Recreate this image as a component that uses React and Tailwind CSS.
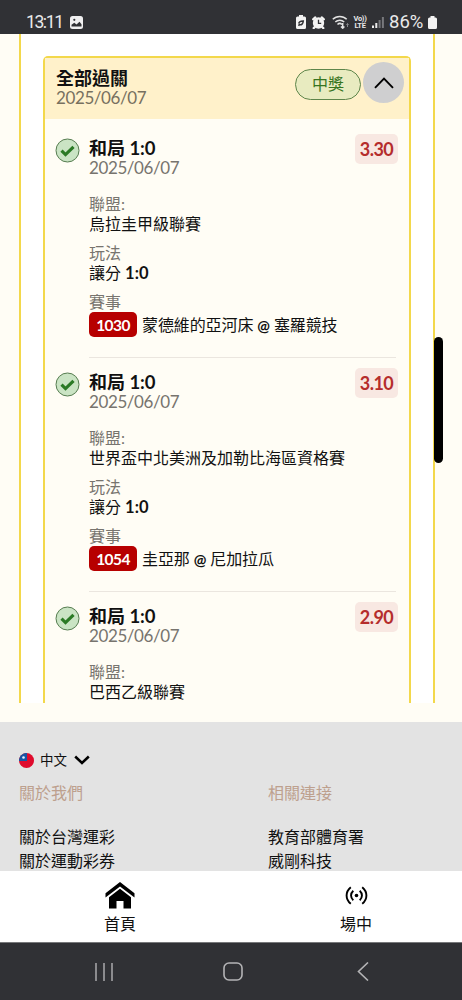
const bets = [
  {
    id: 1,
    odds: "3.30",
    league: "烏拉圭甲級聯賽",
    play: "1:0",
    code: "1030",
    home: "蒙德維的亞河床",
    away: "塞羅競技",
  },
  {
    id: 2,
    odds: "3.10",
    league: "世界盃中北美洲及加勒比海區資格賽",
    play: "1:0",
    code: "1054",
    home: "圭亞那",
    away: "尼加拉瓜",
  },
  {
    id: 3,
    odds: "2.90",
    league: "巴西乙級聯賽",
  },
];

function StatusBar() {
  return (
    <div className="flex h-[34px] shrink-0 items-center bg-[#303135] pl-[26px] pr-[25px] pt-[10px] font-['Roboto','Noto_Sans',sans-serif] text-[18px] text-[#e9e9ea]">
      <span className="w-[37px] whitespace-nowrap text-[17.5px] leading-5 tracking-[-1.4px]">13:11</span>
      <svg className="ml-[7px]" width="13" height="13" viewBox="0 0 13 13">
        <rect width="13" height="13" rx="2.5" fill="#efeff0" />
        <path d="M1.5 10.5V8.8L4.3 6.8 6.5 8.6 9.5 5.8 11.5 8.2V10.500Z" fill="#303135" />
        <circle cx="4.3" cy="3.8" r="1.1" fill="#303135" />
      </svg>

      <div className="ml-auto flex items-center">
        {/* battery saver */}
        <svg width="10" height="14" viewBox="0 0 10 14">
          <path d="M3 0h4v1.500h1.500A1.500 1.500 0 0 1 10 3v9.500a1.500 1.500 0 0 1-1.500 1.500h-7A1.500 1.500 0 0 1 0 12.500V3a1.500 1.500 0 0 1 1.500-1.500H3Z" fill="#f3f3f3" />
          <path d="M2.800 8.500c0-2 1.800-2.300 4.500-2.500-.2 2.800-1.800 4.400-3.900 3.500L2.500 10.800" fill="none" stroke="#303135" strokeWidth="1.500" />
        </svg>
        {/* alarm */}
        <svg className="ml-[6px]" width="13" height="13" viewBox="0 0 13 13">
          <circle cx="6.500" cy="7" r="5.700" fill="#f3f3f3" />
          <path d="M1.200 3.300 3.300 1.400M11.800 3.300 9.700 1.400M2.800 11 1.700 12.100M10.200 11l1.100 1.100" stroke="#f3f3f3" strokeWidth="2.300" strokeLinecap="round" />
          <path d="M6.500 3.800V7.300H9.200" fill="none" stroke="#303135" strokeWidth="1.300" />
        </svg>
        {/* wifi */}
        <svg className="ml-[7px]" width="17" height="14" viewBox="0 0 17 14" fill="none" stroke="#e3e3e3" strokeWidth="1.500">
          <path d="M.8 4.300C4.500.5 11 .5 14.700 4.300M3.300 7c2.400-2.500 6.500-2.500 8.900 0M5.500 9.500c1.300-1.300 3.200-1.300 4.500 0" />
          <path d="M10.700 8v5M9 11.500l1.700 1.700 1.700-1.700" />
          <path d="M15.500 12V8.500M14.300 9.700l1.200-1.200 1.200 1.200" stroke="#85868a" strokeWidth="1" />
        </svg>
        <div className="ml-[4px] w-[14px] text-center text-[7.5px] font-bold leading-[7px] tracking-[-0.3px]">
          <div className="whitespace-nowrap">Vo))</div>
          <div>LTE</div>
        </div>
        <svg className="ml-[5px]" width="12" height="12" viewBox="0 0 12 12">
          <path d="M0 9.500h2V12H0ZM3.300 7h2v5h-2Z" fill="#ededed" />
          <path d="M6.600 4h2v8h-2ZM9.900 1h2v11h-2Z" fill="#77787c" />
        </svg>
        <span className="ml-[5px] w-[39px] whitespace-nowrap text-[18.5px] leading-5">86%</span>
        <svg width="9" height="13" viewBox="0 0 9 13">
          <path d="M2.500 0h4v1.500h1A1.500 1.500 0 0 1 9 3v8.500a1.500 1.500 0 0 1-1.500 1.500h-6A1.500 1.500 0 0 1 0 11.500V3a1.500 1.500 0 0 1 1.500-1.500h1Z" fill="#f3f3f3" />
        </svg>
      </div>
    </div>
  );
}

function BetItem({ bet }) {
  return (
    <div className="flex px-[10px] pt-[14px]">
      <svg className="shrink-0" width="25" height="25" viewBox="0 0 25 25">
        <circle cx="12.500" cy="12.500" r="11.500" fill="#cae4c4" stroke="#567c50" />
        <path d="M6.500 12.700 10.500 16.600 18.500 8.800" fill="none" stroke="#2b7a25" strokeWidth="3.200" />
      </svg>

      <div className="ml-[9px] h-[220px] w-[307px] shrink-0 border-b border-[#ebe6df] text-[16px] leading-5">
        <div className="flex h-10 justify-between">
          <div>
            <p className="text-[18px] font-bold">
              和局 <span className="text-[18.5px]">1:0</span>
            </p>
            <p className="text-[17px] tracking-[-0.4px] text-[#77746e]">2025/06/07</p>
          </div>
          <span className="-mr-[2px] -mt-[4px] flex h-[30px] w-[43px] items-center justify-center rounded-[5px] bg-[#f8e8e2] text-[18px] font-bold tracking-[-0.5px] text-[#b52d2c]">
            {bet.odds}
          </span>
        </div>

        <p className="mt-4 text-[#77746e]">聯盟:</p>
        <p className="whitespace-nowrap">{bet.league}</p>

        {bet.code && (
          <>
            <p className="mt-[9px] text-[#77746e]">玩法</p>
            <p>
              讓分 <span className="text-[16.500px] font-bold">{bet.play}</span>
            </p>

            <p className="mt-[9px] text-[#77746e]">賽事</p>
            <div className="flex h-[25px] items-center">
              <span className="flex h-[25px] w-[48px] items-center justify-center rounded-[5px] bg-[#b70000] text-[15.5px] font-bold tracking-[-0.6px] text-white">
                {bet.code}
              </span>
              <span className="ml-[5px] whitespace-nowrap tracking-[-0.1px]">
                {bet.home} <span className="text-[15px] font-bold">@</span> {bet.away}
              </span>
            </div>
          </>
        )}
      </div>
    </div>
  );
}

function Ticket() {
  return (
    <div className="mx-[22px] mt-[22px] rounded-t-[5px] border-2 border-b-0 border-[#f3d84b] bg-[#fffdf5]">
      <div className="flex h-[61px] items-start justify-between bg-[#fff1ca] pl-[11px] pr-[5px]">
        <div className="pt-[11px] leading-[19px]">
          <p className="text-[18px] font-bold">全部過關</p>
          <p className="text-[17px] tracking-[-0.4px] text-[#77705f]">2025/06/07</p>
        </div>
        <div className="flex items-center pt-[4px]">
          <span className="mr-[2px] mt-[3px] flex h-[31px] w-[66px] items-center justify-center rounded-full border border-[#5e854a] bg-[#e8ebc0] text-[16px] text-[#37751f]">
            中獎
          </span>
          <button className="flex size-[41px] items-center justify-center rounded-full bg-[#cfcfd0]">
            <svg width="20" height="12" viewBox="0 0 20 12" fill="none" stroke="#000" strokeWidth="1.900">
              <path d="M1 10.800 10 1.700 19 10.800" />
            </svg>
          </button>
        </div>
      </div>
      <div className="pt-[5px]">
        {bets.map((bet) => (
          <BetItem key={bet.id} bet={bet} />
        ))}
      </div>
    </div>
  );
}

function Footer() {
  return (
    <div className="h-[149px] shrink-0 bg-[#e3e3e3] pl-[19px] pt-[28px] text-[16px] leading-6">
      <div className="flex h-5 items-center">
        <svg width="15" height="15" viewBox="0 0 15 15">
          <circle cx="7.500" cy="7.500" r="7.500" fill="#df0b2d" />
          <path d="M8 0A7.500 7.500 0 0 0 0 8H8Z" fill="#1756a5" />
          <circle cx="4.500" cy="4.500" r="1.300" fill="#e9f3ff" />
        </svg>
        <span className="ml-[6px] text-[13.5px]">中文</span>
        <svg className="ml-[7px]" width="16" height="10" viewBox="0 0 16 10" fill="none" stroke="#000" strokeWidth="2.500">
          <path d="M1.200 1.500 8 8 14.800 1.500" />
        </svg>
      </div>
      <div className="mt-[11px] grid grid-cols-[249px_1fr]">
        <div>
          <p className="text-[#bda08e]">關於我們</p>
          <p className="mt-[20px]">關於台灣運彩</p>
          <p>關於運動彩券</p>
        </div>
        <div>
          <p className="text-[#bda08e]">相關連接</p>
          <p className="mt-[20px]">教育部體育署</p>
          <p>威剛科技</p>
        </div>
      </div>
    </div>
  );
}

function TabBar() {
  return (
    <div className="flex h-[71px] shrink-0 justify-between bg-white pl-[90px] pr-[76px] text-[16px] leading-5">
      <div className="flex w-[60px] flex-col items-center pt-[11px]">
        <svg width="30" height="27" viewBox="0 0 30 27">
          <path d="M.5 11.200 15 0 29.500 11.200V15.500L15 4.600.5 15.500Z" />
          <path d="M4 15.200 15 6.800 26 15.200V26.500H18.500V19h-7v7.500H4Z" />
        </svg>
        <span className="mt-[5px]">首頁</span>
      </div>
      <div className="flex w-[60px] flex-col items-center pt-[15px]">
        <svg width="23" height="19" viewBox="0 0 23 19" fill="none" stroke="#000" strokeWidth="1.900">
          <path d="M5.800 1.200C.2 5.700.2 13.300 5.800 17.800M17.200 1.200c5.600 4.500 5.600 12.100 0 16.600M8.300 4.800c-3 2.800-3 6.600 0 9.400M14.700 4.800c3 2.800 3 6.600 0 9.400" />
          <circle cx="11.500" cy="9.500" r="1.800" fill="#000" stroke="none" />
        </svg>
        <span className="mt-[9px]">場中</span>
      </div>
    </div>
  );
}

function SystemNav() {
  return (
    <div className="flex h-[58px] shrink-0 items-center border-t border-[#77787a] bg-[#303135] pl-[95px]">
      <svg width="18" height="18" viewBox="0 0 18 18" stroke="#a9a9ac" strokeWidth="1.500">
        <path d="M1 0V18M9 0V18M17 0V18" />
      </svg>
      <svg className="ml-[110px]" width="20" height="19" viewBox="0 0 20 19" fill="none" stroke="#b4b4b6" strokeWidth="1.600">
        <rect x="1" y="1" width="18" height="17" rx="5" />
      </svg>
      <svg className="ml-[114px]" width="12" height="19" viewBox="0 0 12 19" fill="none" stroke="#b4b4b6" strokeWidth="1.600">
        <path d="M11 .5 1.500 9.500 11 18.500" />
      </svg>
    </div>
  );
}

export default function App() {
  return (
    <div className="relative flex h-[1000px] w-[462px] flex-col overflow-hidden bg-[#fffdf5] font-['Lato','Noto_Sans_CJK_TC',sans-serif] text-[#111]">
      <StatusBar />
      <div className="mb-[19px] ml-[19px] h-[669px] w-[416px] shrink-0 overflow-hidden border-x-2 border-[#f3d84b] bg-white">
        <Ticket />
      </div>
      <Footer />
      <TabBar />
      <SystemNav />

      {/* scroll thumb */}
      <div className="absolute left-[434px] top-[337px] h-[126px] w-[9px] rounded-full bg-black" />
    </div>
  );
}
